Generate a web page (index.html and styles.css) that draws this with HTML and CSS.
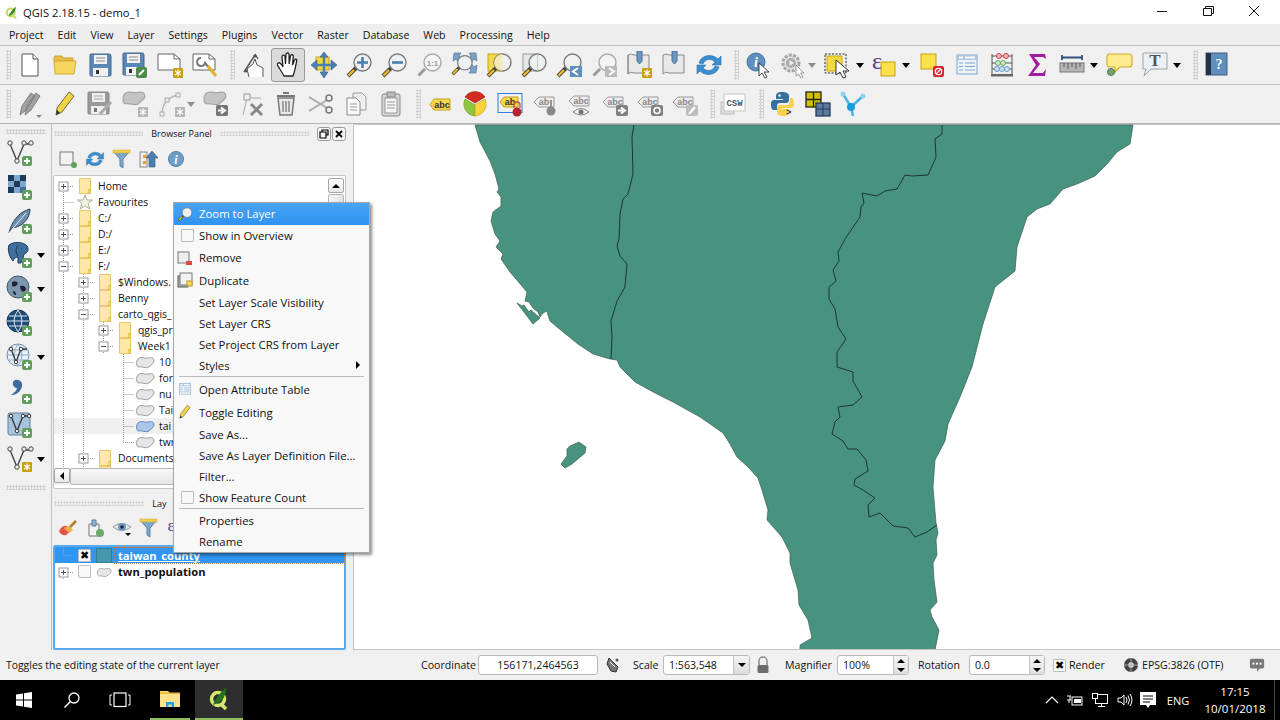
FILE: index.html
```html
<!doctype html>
<html lang="en">
  <head>
    <meta charset="utf-8">
    <title>QGIS 2.18.15 - demo_1</title>
    <link rel="stylesheet" href="styles.css">
  </head>
  <body>
    <svg class="sprite">
      <defs>
        <g id="lens">
          <path d="M3 25 L11 17" stroke="#444" stroke-width="4"/>
          <path d="M3.5 24.5 L9 19" stroke="#eebb22" stroke-width="2.4"/>
          <circle cx="17.5" cy="11.5" r="8.5" fill="#eef1f2" stroke="#7a7a7a" stroke-width="1.4"/>
        </g>
        <g id="lens-grey">
          <path d="M3.5 24.5 L10 18" stroke="#999" stroke-width="3"/>
          <circle cx="17.5" cy="11.5" r="8.5" fill="#f4f4f4" stroke="#a8a8a8" stroke-width="1.4"/>
        </g>
        <g id="floppy">
          <path d="M2 3 Q2 2 3 2 L21 2 Q23 2 23 4 L23 23 Q23 24 22 24 L3 24 Q2 24 2 23 Z" fill="#5a87b6" stroke="#44678f"/>
          <rect x="6" y="3" width="13" height="9" fill="#f2f2f2"/>
          <path d="M8 6 H17 M8 9 H17" stroke="#8a8a8a"/>
          <rect x="5" y="16" width="15" height="8" fill="#f2f2f2"/>
          <rect x="8" y="18" width="3" height="4" fill="#333"/>
        </g>
        <g id="floppy-grey">
          <path d="M2 3 Q2 2 3 2 L21 2 Q23 2 23 4 L23 23 Q23 24 22 24 L3 24 Q2 24 2 23 Z" fill="#9a9a9a" stroke="#858585"/>
          <rect x="6" y="3" width="13" height="9" fill="#eee"/>
          <path d="M8 6 H17 M8 9 H17" stroke="#aaa"/>
          <rect x="5" y="16" width="15" height="8" fill="#eee"/>
          <rect x="8" y="18" width="3" height="4" fill="#777"/>
        </g>
        <g id="star-badge">
          <rect x="17" y="17" width="10" height="10" rx="1" fill="#c99f0d"/>
          <path d="M22 18.5 V25.5 M19 20 L25 24 M25 20 L19 24" stroke="#fff" stroke-width="1.2"/>
        </g>
        <g id="star-badge-grey">
          <rect x="17" y="17" width="10" height="10" rx="1" fill="#b5b5b5"/>
          <path d="M22 18.5 V25.5 M19 20 L25 24 M25 20 L19 24" stroke="#fff" stroke-width="1.2"/>
        </g>
        <g id="plus-badge">
          <rect x="16" y="17" width="10" height="10" rx="2" fill="#5f9f5b"/>
          <path d="M21 19 V25 M18 22 H24" stroke="#fff" stroke-width="2"/>
        </g>
        <path id="blob-shape" d="M3 4 C6 1 10 4 13 3 C17 2 19 3 19 6 C19 9 15 10 14 12 C11 14 7 11 4 12 C1 12 1 6 3 4 Z"/>
        <g id="abc-grey">
          <path d="M1 9 L6 4 H21 V14 H6 Z" fill="#ececec" stroke="#9b9b9b"/>
        </g>
      </defs>

      <symbol id="i-new" viewBox="0 0 28 28"><path d="M6 3 H17 L22 8 V25 H6 Z" fill="#fff" stroke="#555"/><path d="M17 3 V8 H22" fill="#eee" stroke="#555"/></symbol>
      <symbol id="i-open" viewBox="0 0 28 28"><path d="M3 7 L4 5 H11 L13 7 H22 V10 H3 Z" fill="#e8bf45" stroke="#c9a030"/><path d="M3 10 H25 L23 23 H4 Z" fill="#f6d65f" stroke="#d3aa36"/></symbol>
      <symbol id="i-save" viewBox="0 0 28 28"><use href="#floppy" x="2" y="1"/></symbol>
      <symbol id="i-saveas" viewBox="0 0 28 28"><use href="#floppy" x="0" y="0"/><rect x="15" y="16" width="11" height="11" rx="2" fill="#4f8a4a"/><path d="M18 24 L23 19" stroke="#fff" stroke-width="2"/></symbol>
      <symbol id="i-layout" viewBox="0 0 28 28"><path d="M2 3 H18 L24 8 V19 H2 Z" fill="#fff" stroke="#666"/><path d="M18 3 V8 H24" fill="none" stroke="#666"/><use href="#star-badge" x="0" y="0"/></symbol>
      <symbol id="i-manager" viewBox="0 0 28 28"><path d="M2 3 H18 L24 8 V19 H2 Z" fill="#fff" stroke="#666"/><path d="M18 3 V8 H24" fill="none" stroke="#666"/><path d="M10 7 A4 4 0 1 0 14 12 L24 24" fill="none" stroke="#777" stroke-width="2"/><path d="M17 15 L25 25" stroke="#e0b32c" stroke-width="3"/></symbol>
      <symbol id="i-touch" viewBox="0 0 28 28"><path d="M15 4 L4 21 M15 3 L18 8" fill="none" stroke="#555" stroke-width="1.4"/><path d="M9 26 L7 18 L13 13 L15 8 L17 14 L23 17 V26" fill="#fff" stroke="#555"/><circle cx="6" cy="20" r="1.6" fill="#555"/><circle cx="15" cy="5" r="1.6" fill="#555"/></symbol>
      <symbol id="i-pan" viewBox="0 0 28 28"><path d="M10 25 C8 21 5 17 3.5 14 C3 11.5 5.5 11 7 13 L9 16 L8 6 C8 3.5 10.8 3.5 11 6 L11.5 13 L12 3.5 C12 1.5 15 1.5 15 3.5 L15.2 13 L16.5 5 C17 3 19.5 3.5 19.3 5.5 L18.5 14 L20.5 9 C21.2 7.5 23 8 22.7 9.8 L21 18 C20.5 21 19.5 23 19 25 Z" fill="#fff" stroke="#222" stroke-width="1.3"/></symbol>
      <symbol id="i-pansel" viewBox="0 0 28 28"><rect x="6" y="6" width="13" height="13" fill="#f4d63a" stroke="#c9a61d"/><path d="M14 1 L18 6 H10 Z M14 27 L18 21 H10 Z M1 14 L7 9 V19 Z M27 14 L21 9 V19 Z" fill="#4c7fb3" stroke="#33587f" stroke-width=".6"/><path d="M14 5 V23 M6 14 H22" stroke="#4c7fb3" stroke-width="2.4"/></symbol>
      <symbol id="i-zin" viewBox="0 0 28 28"><use href="#lens"/><path d="M17.5 6 V17 M12 11.5 H23" stroke="#4a7dae" stroke-width="2.6"/></symbol>
      <symbol id="i-zout" viewBox="0 0 28 28"><use href="#lens"/><path d="M12 11.5 H23" stroke="#4a7dae" stroke-width="2.6"/></symbol>
      <symbol id="i-z11" viewBox="0 0 28 28"><use href="#lens-grey"/><text x="17.5" y="15" class="svg-small" text-anchor="middle">1:1</text></symbol>
      <symbol id="i-zfull" viewBox="0 0 28 28"><path d="M4 2 H11 L9 5 L13 9 L9 12 L6 8 L3 10 Z M26 2 H19 L21 5 L17 9 L21 12 L24 8 L27 10 Z M26 22 H19 L21 19 L17 15 L21 12 L24 16 L27 14 Z" fill="#7ba0c6" stroke="#55799e" stroke-width=".7"/><use href="#lens" transform="translate(0 2) scale(.85)"/></symbol>
      <symbol id="i-zlayer" viewBox="0 0 28 28"><rect x="3" y="3" width="15" height="17" fill="#f3d84a" stroke="#c6a31c"/><use href="#lens"/><path d="M17.5 3 A8.5 8.5 0 0 0 17.5 20 Z" fill="#f3e9a8" opacity=".8"/></symbol>
      <symbol id="i-zsel" viewBox="0 0 28 28"><rect x="3" y="3" width="15" height="17" fill="#e6e6e6" stroke="#9a9a9a"/><use href="#lens"/><path d="M17.5 3 V20" stroke="#ccc"/></symbol>
      <symbol id="i-mzoom" viewBox="0 0 28 28"><use href="#lens"/></symbol>
      <symbol id="i-zlast" viewBox="0 0 28 28"><use href="#lens"/><rect x="15" y="15" width="12" height="11" fill="#5f8fbc"/><path d="M23 17 L18 20.5 L23 24" fill="none" stroke="#fff" stroke-width="2"/></symbol>
      <symbol id="i-znext" viewBox="0 0 28 28"><use href="#lens-grey"/><rect x="15" y="15" width="12" height="11" fill="#b9b9b9"/><path d="M19 17 L24 20.5 L19 24" fill="none" stroke="#fff" stroke-width="2"/></symbol>
      <symbol id="i-bmnew" viewBox="0 0 28 28"><path d="M3 4 Q6 2 9 4 H24 V22 H9 Q5 20 3 23 Z" fill="#e8e8e8" stroke="#888"/><path d="M3 4 V23" stroke="#888"/><path d="M12 0 H17 V10 L14.5 13 L12 10 Z" fill="#6b97c1" stroke="#4b7096"/><use href="#star-badge" x="0" y="0"/></symbol>
      <symbol id="i-bm" viewBox="0 0 28 28"><path d="M3 4 Q6 2 9 4 H24 V22 H9 Q5 20 3 23 Z" fill="#e8e8e8" stroke="#888"/><path d="M12 0 H17 V10 L14.5 13 L12 10 Z" fill="#6b97c1" stroke="#4b7096"/></symbol>
      <symbol id="i-refresh" viewBox="0 0 28 28"><path d="M4 12 C6 4 17 2 23 8 L26 5 V14 H17 L20 11 C16 7 10 8 8 13 Z" fill="#3d8ed0" stroke="#2d6ea6" stroke-width=".6"/><path d="M24 16 C22 24 11 26 5 20 L2 23 V14 H11 L8 17 C12 21 18 20 20 15 Z" fill="#3d8ed0" stroke="#2d6ea6" stroke-width=".6"/></symbol>
      <symbol id="i-identify" viewBox="0 0 28 28"><circle cx="12" cy="11" r="9" fill="#5f8fbf" stroke="#4a76a3"/><text x="12" y="16" class="svg-info" text-anchor="middle">i</text><path d="M15 12 L15 25 L18 22 L21 27 L23 26 L20 21 L25 21 Z" fill="#fff" stroke="#222" stroke-width=".8"/></symbol>
      <symbol id="i-action" viewBox="0 0 28 28"><circle cx="12" cy="12" r="8" fill="#e4e4e4" stroke="#a5a5a5" stroke-width="3" stroke-dasharray="3 1.4"/><circle cx="12" cy="12" r="5" fill="#aaa"/><path d="M10.5 9 L15 12 L10.5 15 Z" fill="#eee"/><path d="M17 14 L17 25 L19.5 23 L22 27 L24 26 L21.5 22 L25 22 Z" fill="#fff" stroke="#888" stroke-width=".8"/></symbol>
      <symbol id="i-select" viewBox="0 0 28 28"><rect x="2" y="3" width="21" height="19" fill="none" stroke="#222" stroke-dasharray="2 1.5"/><rect x="4" y="5" width="15" height="15" fill="#f6d93d" stroke="#c8a61e"/><path d="M13 9 L13 24 L17 21 L20 27 L23 26 L20 20 L26 20 Z" fill="#fff" stroke="#222" stroke-width=".9"/></symbol>
      <symbol id="i-expr" viewBox="0 0 28 28"><rect x="11" y="11" width="14" height="14" fill="#fbe04a" stroke="#c79f10"/><text x="2" y="18" class="svg-expr">&#949;</text></symbol>
      <symbol id="i-desel" viewBox="0 0 28 28"><rect x="3" y="3" width="15" height="15" fill="#f9e14d" stroke="#c89f14"/><rect x="15" y="15" width="11" height="11" rx="2" fill="#d9242e"/><circle cx="20.5" cy="20.5" r="3.2" fill="none" stroke="#fff" stroke-width="1.2"/><path d="M18.5 22.5 L22.5 18.5" stroke="#fff" stroke-width="1.2"/></symbol>
      <symbol id="i-table" viewBox="0 0 28 28"><rect x="4" y="4" width="20" height="19" fill="#eef3f8" stroke="#7ea5cc"/><rect x="4" y="4" width="20" height="5" fill="#aac5df"/><rect x="6" y="5.5" width="4" height="2" fill="#fff"/><rect x="12" y="5.5" width="10" height="2" fill="#fff"/><path d="M6 12 H10 M12 12 H22 M6 15.500 H10 M12 15.500 H22 M6 19 H10 M12 19 H22" stroke="#7ea5cc"/></symbol>
      <symbol id="i-abacus" viewBox="0 0 28 28"><path d="M4 3 V24 M24 3 V24 M4 5 H24 M4 12 H24 M4 18 H24" fill="none" stroke="#555"/><rect x="3" y="23" width="22" height="2.500" fill="#666"/><circle cx="11" cy="5" r="2.500" fill="#f0b7b7" stroke="#c44"/><circle cx="18" cy="5" r="2.500" fill="#f0b7b7" stroke="#c44"/><circle cx="10" cy="12" r="2.500" fill="#cfe7c4" stroke="#6a6"/><circle cx="15" cy="12" r="2.500" fill="#cfe7c4" stroke="#6a6"/><circle cx="9" cy="18" r="2.500" fill="#cfe0f2" stroke="#69c"/><circle cx="14" cy="18" r="2.500" fill="#cfe0f2" stroke="#69c"/><circle cx="19" cy="18" r="2.500" fill="#cfe0f2" stroke="#69c"/></symbol>
      <symbol id="i-sigma" viewBox="0 0 28 28"><path d="M6 3 H22 L23 8 L20 6 H11 L17 13 L10 22 H20 L23 18 L22 25 H5 L13 14 Z" fill="#a11ba0"/></symbol>
      <symbol id="i-measure" viewBox="0 0 28 28"><path d="M4 4 V9 M24 4 V9 M4 6.500 H24" stroke="#31517a" stroke-width="1.8"/><rect x="2" y="12" width="24" height="9" fill="#b5b5b5" stroke="#7b7b7b"/><path d="M6 12 V16 M10 12 V18 M14 12 V16 M18 12 V18 M22 12 V16" stroke="#555"/></symbol>
      <symbol id="i-tip" viewBox="0 0 28 28"><path d="M4 3 H23 Q26 3 26 6 V13 Q26 16 23 16 H14 L9 21 V16 H4 Q1 16 1 13 V6 Q1 3 4 3 Z" fill="#fdeb8e" stroke="#d3ac27" stroke-width="1.2"/><circle cx="5" cy="21" r="3.500" fill="#77a36f" stroke="#4d7a4a"/></symbol>
      <symbol id="i-text" viewBox="0 0 28 28"><path d="M2 2 H26 V18 H10 L3 25 L5 18 H2 Z" fill="#eaf0f4" stroke="#9aa3a8"/><text x="14" y="15" class="svg-t" text-anchor="middle">T</text></symbol>
      <symbol id="i-help" viewBox="0 0 28 28"><rect x="3" y="2" width="21" height="22" fill="#5f8fbf" stroke="#3e5f82"/><rect x="3" y="2" width="5" height="22" fill="#26323f"/><text x="16" y="18" class="svg-help" text-anchor="middle">?</text></symbol>

      <symbol id="i-edits" viewBox="0 0 28 28"><path d="M4 25 L6 16 L15 3 L19 6 L10 20 Z M9 25 L11 16 L20 3 L24 6 L15 20 Z" fill="#a2a2a2" stroke="#7e7e7e"/><path d="M20 25 H26 L23 28 Z" fill="#888"/></symbol>
      <symbol id="i-pencil" viewBox="0 0 28 28"><path d="M6 18 L18 2 L23 6 L11 22 L5 25 Z" fill="#eed446" stroke="#6f6a3f"/><path d="M5 25 L6 20 L9 23 Z" fill="#333"/></symbol>
      <symbol id="i-savedit" viewBox="0 0 28 28"><use href="#floppy-grey"/><path d="M14 24 L25 12" stroke="#aaa" stroke-width="3"/></symbol>
      <symbol id="i-addfeat" viewBox="0 0 28 28"><use href="#blob-shape" fill="#c4c4c4" stroke="#a5a5a5" transform="scale(1.25) translate(0 -1)"/><use href="#star-badge-grey"/></symbol>
      <symbol id="i-nodeadd" viewBox="0 0 28 28"><path d="M4 24 Q4 10 19 5" fill="none" stroke="#b5b5b5" stroke-width="1.4"/><rect x="2" y="22" width="4" height="4" fill="#eee" stroke="#aaa"/><rect x="7" y="8" width="4" height="4" fill="#eee" stroke="#aaa"/><rect x="18" y="3" width="4" height="4" fill="#eee" stroke="#aaa"/><use href="#star-badge-grey"/></symbol>
      <symbol id="i-movef" viewBox="0 0 28 28"><use href="#blob-shape" fill="#c4c4c4" stroke="#a5a5a5" transform="scale(1.25) translate(0 -1)"/><rect x="14" y="15" width="12" height="11" rx="1.500" fill="#777"/><path d="M16 20.500 H21 M19 17.500 L23 20.500 L19 23.500" fill="none" stroke="#fff" stroke-width="2"/></symbol>
      <symbol id="i-nodetool" viewBox="0 0 28 28"><path d="M6 25 L10 8 H24" fill="none" stroke="#aaa"/><rect x="7" y="4" width="6" height="6" fill="#eee" stroke="#999"/><path d="M14 14 L25 25 M14 25 L25 14" stroke="#888" stroke-width="3"/></symbol>
      <symbol id="i-delete" viewBox="0 0 28 28"><path d="M6 8 H22 L20 25 H8 Z" fill="#e9e9e9" stroke="#777" stroke-width="1.500"/><path d="M5 6 H23 M11 3 H17" stroke="#777" stroke-width="1.800"/><path d="M11 11 V22 M14 11 V22 M17 11 V22" stroke="#888" stroke-width="1.500"/></symbol>
      <symbol id="i-cut" viewBox="0 0 28 28"><path d="M2 7 L20 18 M2 21 L20 10" stroke="#aaa" stroke-width="2"/><circle cx="22" cy="8" r="3" fill="none" stroke="#777" stroke-width="1.500"/><circle cx="22" cy="20" r="3" fill="none" stroke="#777" stroke-width="1.500"/></symbol>
      <symbol id="i-copy" viewBox="0 0 28 28"><path d="M11 3 H20 L24 7 V20 H11 Z" fill="#eee" stroke="#999"/><path d="M5 8 H14 L18 12 V25 H5 Z" fill="#fafafa" stroke="#888"/><path d="M8 14 H15 M8 17 H15 M8 20 H15" stroke="#999"/></symbol>
      <symbol id="i-paste" viewBox="0 0 28 28"><rect x="5" y="4" width="18" height="22" rx="2" fill="#d7d7d7" stroke="#888"/><rect x="10" y="2" width="8" height="5" fill="#bbb" stroke="#888"/><rect x="8" y="8" width="12" height="15" fill="#f6f6f6" stroke="#999"/><path d="M10 12 H18 M10 15 H18 M10 18 H18" stroke="#999"/></symbol>
      <symbol id="i-abc" viewBox="0 0 28 28"><path d="M4 14.500 L8 9 H24 V20 H8 Z" fill="#f5d94a" stroke="#c7a11c"/><text x="16" y="17.500" class="svg-abc" text-anchor="middle">abc</text></symbol>
      <symbol id="i-style" viewBox="0 0 28 28"><path d="M14 15 L4 9 A12 12 0 0 0 14 26 Z" fill="#8ec63f" stroke="#6d9b2b" stroke-width=".7"/><path d="M14 15 L24 9 A12 12 0 0 1 14 26 Z" fill="#f7d43e" stroke="#c9a41a" stroke-width=".7"/><path d="M14 15 L4 9 A12 12 0 0 1 24 9 Z" fill="#d42a20" stroke="#a71c15" stroke-width=".7" transform="translate(0 -2)"/></symbol>
      <symbol id="i-pin" viewBox="0 0 28 28"><rect x="2" y="3.500" width="24" height="19" fill="none" stroke="#2e7de0"/><path d="M4 12 L8 7 H22 V17 H8 Z" fill="#f5d94a" stroke="#c7a11c"/><text x="14" y="15" class="svg-abc" text-anchor="middle">ab</text><path d="M18 18 V15 A3 3 0 0 1 24 15 V18" fill="none" stroke="#b55" stroke-width="1.300"/><circle cx="21" cy="22" r="4.500" fill="#b42430"/></symbol>
      <symbol id="i-abcpin" viewBox="0 0 28 28"><use href="#abc-grey" x="2" y="3"/><text x="13" y="15" class="svg-abcg" text-anchor="middle">ab</text><path d="M20 19 V10" stroke="#777" stroke-width="1.500"/><circle cx="20" cy="21" r="4.500" fill="#888"/></symbol>
      <symbol id="i-abceye" viewBox="0 0 28 28"><use href="#abc-grey" x="2" y="2"/><text x="15" y="14" class="svg-abcg" text-anchor="middle">abc</text><path d="M7 22 Q15 15 23 22 Q15 28 7 22 Z" fill="#eee" stroke="#888"/><circle cx="15" cy="22" r="2.500" fill="#777"/></symbol>
      <symbol id="i-abcmove" viewBox="0 0 28 28"><use href="#abc-grey" x="1" y="3"/><text x="14" y="15" class="svg-abcg" text-anchor="middle">abc</text><rect x="15" y="15" width="12" height="11" rx="2" fill="#808080"/><path d="M17 20.500 H22 M20 17.500 L24 20.500 L20 23.500" fill="none" stroke="#fff" stroke-width="2"/></symbol>
      <symbol id="i-abcrot" viewBox="0 0 28 28"><use href="#abc-grey" x="1" y="3"/><text x="14" y="15" class="svg-abcg" text-anchor="middle">abc</text><rect x="15" y="15" width="12" height="11" rx="2" fill="#808080"/><circle cx="21" cy="20.500" r="3" fill="none" stroke="#fff" stroke-width="1.500"/></symbol>
      <symbol id="i-abcedit" viewBox="0 0 28 28"><use href="#abc-grey" x="1" y="3"/><text x="14" y="15" class="svg-abcg" text-anchor="middle">abc</text><rect x="15" y="15" width="12" height="11" rx="2" fill="#bdbdbd"/><path d="M18 24 L24 17" stroke="#fff" stroke-width="2"/></symbol>
      <symbol id="i-csw" viewBox="0 0 28 28"><rect x="1" y="12" width="13" height="12" fill="#ddd" stroke="#bbb"/><rect x="4" y="4" width="21" height="17" fill="#fff" stroke="#c4c4c4"/><text x="14.500" y="16" class="svg-csw" text-anchor="middle">CSW</text></symbol>
      <symbol id="i-python" viewBox="0 0 28 28"><path d="M13 2 C8 2 7 4 7 6 V9 H14 V10 H5 C2 10 2 13 2 15 C2 18 3 20 5 20 H8 V16 C8 14 9 13 11 13 H17 C19 13 20 12 20 10 V6 C20 3 17 2 13 2 Z" fill="#376f9f"/><path d="M14 26 C19 26 20 24 20 22 V19 H13 V18 H22 C25 18 25 15 25 13 C25 10 24 8 22 8 H21 V11 C21 14 20 15 18 15 H11 C9 15 8 16 8 18 V22 C8 25 11 26 14 26 Z" fill="#f6d14d"/><circle cx="10.500" cy="5.500" r="1.200" fill="#fff"/><text x="17" y="25" class="svg-py">&gt;</text></symbol>
      <symbol id="i-plugin" viewBox="0 0 28 28"><rect x="2" y="2" width="15" height="15" fill="#d3c000" stroke="#222" stroke-width="1.300"/><path d="M9.500 2 V17 M2 9.500 H17" stroke="#222" stroke-width="1.300"/><rect x="12" y="13" width="14" height="13" fill="#5a7a9e" stroke="#263c55" stroke-width="1.300"/><path d="M19 13 V26 M12 19 H26" stroke="#263c55"/></symbol>
      <symbol id="i-v" viewBox="0 0 28 28"><path d="M4 4 L12 17 L14 26 M12 17 L24 6" fill="none" stroke="#45b2e8" stroke-width="2.400"/><circle cx="4" cy="4" r="2.500" fill="#8fd3f4"/><circle cx="12" cy="17" r="4" fill="#1b9be0"/><circle cx="24" cy="6" r="2.500" fill="#8fd3f4"/></symbol>

      <symbol id="i-addogr" viewBox="0 0 28 28"><path d="M4 5 L11 22 L18 5 L25 5" fill="none" stroke="#444" stroke-width="1.400"/><circle cx="4" cy="4" r="2.200" fill="#eee" stroke="#444"/><circle cx="11" cy="22" r="2.200" fill="#eee" stroke="#444"/><circle cx="18" cy="4" r="2.200" fill="#eee" stroke="#444"/><circle cx="25" cy="4" r="2.200" fill="#eee" stroke="#444"/><use href="#plus-badge"/></symbol>
      <symbol id="i-addraster" viewBox="0 0 28 28"><rect x="2" y="2" width="18" height="18" fill="#7fa8cf"/><rect x="2" y="2" width="6" height="6" fill="#1f3a57"/><rect x="14" y="2" width="6" height="6" fill="#1f3a57"/><rect x="8" y="8" width="6" height="6" fill="#1f3a57"/><rect x="2" y="14" width="6" height="6" fill="#1f3a57"/><rect x="14" y="14" width="6" height="6" fill="#456f98"/><use href="#plus-badge"/></symbol>
      <symbol id="i-addlite" viewBox="0 0 28 28"><path d="M3 26 C5 16 12 5 24 2 C24 12 16 20 6 21 Z" fill="#6d8cab" stroke="#31465e"/><path d="M3 26 L20 6" stroke="#e6edf4"/><use href="#plus-badge"/></symbol>
      <symbol id="i-addpg" viewBox="0 0 28 28"><path d="M3 4 C8 0 18 1 21 5 C24 9 20 13 18 13 C17 17 17 20 15 22 H12 V16 C9 16 8 18 7 20 C4 17 1 9 3 4 Z" fill="#3f6f9f" stroke="#1c3a59"/><path d="M12 4 Q8 10 12 15 M15 7 L16 8" fill="none" stroke="#1c3a59"/><use href="#plus-badge"/></symbol>
      <symbol id="i-addwms" viewBox="0 0 28 28"><circle cx="12" cy="12" r="11" fill="#7d97ae" stroke="#42596e"/><path d="M6 7 Q10 5 12 8 Q10 13 6 11 Z M14 11 Q20 10 20 15 Q15 20 14 11 Z M7 16 Q10 16 10 20 Q7 20 7 16 Z" fill="#223"/><use href="#plus-badge"/></symbol>
      <symbol id="i-addwcs" viewBox="0 0 28 28"><circle cx="12" cy="12" r="11" fill="#204c7a" stroke="#14324f"/><path d="M1 12 H23 M3 7 H21 M3 17 H21 M12 1 Q4 12 12 23 Q20 12 12 1 Z" fill="none" stroke="#dbe7f2"/><use href="#plus-badge"/></symbol>
      <symbol id="i-addwfs" viewBox="0 0 28 28"><circle cx="12" cy="12" r="11" fill="#e8f0f7" stroke="#6e8fb0"/><path d="M1 12 H23 M3 7 H21 M3 17 H21 M12 1 Q4 12 12 23 Q20 12 12 1 Z" fill="none" stroke="#8facc8"/><path d="M5 6 L10 19 L15 6 L21 6" fill="none" stroke="#333" stroke-width="1.300"/><circle cx="5" cy="6" r="1.800" fill="#eee" stroke="#333"/><circle cx="10" cy="19" r="1.800" fill="#eee" stroke="#333"/><circle cx="15" cy="6" r="1.800" fill="#eee" stroke="#333"/><use href="#plus-badge"/></symbol>
      <symbol id="i-addcomma" viewBox="0 0 28 28"><path d="M9 3 C15 2 18 7 15 12 C13 16 9 18 5 18 C9 15 11 13 11 11 C7 11 5 5 9 3 Z" fill="#3e6d9b"/><use href="#plus-badge"/></symbol>
      <symbol id="i-addvt" viewBox="0 0 28 28"><rect x="2" y="2" width="22" height="22" rx="2" fill="#a8c3dc" stroke="#5f7f9f"/><path d="M5 5 L11 20 L17 5 L23 5" fill="none" stroke="#333" stroke-width="1.300"/><circle cx="5" cy="5" r="1.800" fill="#eee" stroke="#333"/><circle cx="11" cy="20" r="1.800" fill="#eee" stroke="#333"/><circle cx="17" cy="5" r="1.800" fill="#eee" stroke="#333"/><circle cx="23" cy="5" r="1.800" fill="#eee" stroke="#333"/><use href="#plus-badge"/></symbol>
      <symbol id="i-newv" viewBox="0 0 28 28"><path d="M4 5 L11 22 L18 5 L25 5" fill="none" stroke="#444" stroke-width="1.400"/><circle cx="4" cy="4" r="2.200" fill="#eee" stroke="#444"/><circle cx="11" cy="22" r="2.200" fill="#eee" stroke="#444"/><circle cx="18" cy="4" r="2.200" fill="#eee" stroke="#444"/><circle cx="25" cy="4" r="2.200" fill="#eee" stroke="#444"/><use href="#star-badge" x="-1"/></symbol>

      <symbol id="i-bnew" viewBox="0 0 20 20"><rect x="2" y="3" width="13" height="13" fill="#f2f2f2" stroke="#777"/><circle cx="16" cy="16" r="3" fill="#5da35a"/></symbol>
      <symbol id="i-bfilter" viewBox="0 0 20 20"><path d="M1 2 H18 L11 10 V19 L8 17 V10 Z" fill="#7ea9cc" stroke="#5b83a8"/><rect x="1" y="1" width="17" height="3" fill="#f1d04b" stroke="#c7a62a" stroke-width=".5"/></symbol>
      <symbol id="i-bcollapse" viewBox="0 0 20 20"><rect x="1" y="3" width="7" height="15" fill="#eee" stroke="#888"/><rect x="4" y="6" width="3" height="3" fill="#ee9b2d"/><rect x="4" y="12" width="3" height="3" fill="#ee9b2d"/><path d="M13 2 L19 9 H16 V18 H10 V9 H7 Z" fill="#4d7dab" stroke="#33587f" stroke-width=".6"/></symbol>
      <symbol id="i-binfo" viewBox="0 0 20 20"><circle cx="10" cy="10" r="7.500" fill="#6f9dca" stroke="#527da8"/><text x="10" y="14.500" class="svg-binfo" text-anchor="middle">i</text></symbol>
      <symbol id="i-lstyle" viewBox="0 0 20 20"><path d="M1 13 Q4 7 9 8 L13 13 L8 17 Q3 18 1 13 Z" fill="#e2534b"/><path d="M6 10 L11 8 L15 12 L11 15 Z" fill="#f0b341"/><path d="M12 9 L18 3" stroke="#b57a32" stroke-width="2.600"/></symbol>
      <symbol id="i-laddgroup" viewBox="0 0 20 20"><path d="M4 6 H14 V18 H4 Z" fill="#f2f2f2" stroke="#777"/><path d="M7 2 H11 V8 H7 Z" fill="#8fb5d6" stroke="#55789a"/><circle cx="15" cy="15" r="4" fill="#6aa868"/></symbol>
      <symbol id="i-leye" viewBox="0 0 20 20"><path d="M1 9 Q9 2 19 9 Q9 16 1 9 Z" fill="#e8e8e8" stroke="#999"/><circle cx="10" cy="9" r="4" fill="#6d99c4"/><circle cx="10" cy="9" r="1.800" fill="#223"/><path d="M13 15 H19 L16 18 Z" fill="#000"/></symbol>

      <symbol id="i-folder" viewBox="0 0 12 16"><path d="M0.500 0.500 H11.500 V15.500 H0.500 Z" fill="#fde9a5" stroke="#e9c76a"/><path d="M10 11 H11.500 V15.500 H9 Z" fill="#fbd96d" stroke="#d9b450" stroke-width=".7"/></symbol>
      <symbol id="i-star" viewBox="0 0 16 16"><path d="M8 1 L10 6 L15.500 6 L11 9.500 L12.800 15 L8 11.800 L3.200 15 L5 9.500 L0.500 6 L6 6 Z" fill="#f1f1e4" stroke="#adad9a"/></symbol>
      <symbol id="i-blob" viewBox="0 0 20 14"><use href="#blob-shape" fill="#e6e6e6" stroke="#9b9b9b"/></symbol>
      <symbol id="i-blobblue" viewBox="0 0 20 14"><use href="#blob-shape" fill="#a9c8ea" stroke="#5d88b4"/></symbol>

      <symbol id="t-v" viewBox="0 0 20 16"><path d="M9.500 0 V16" class="dots"/></symbol>
      <symbol id="t-t" viewBox="0 0 20 16"><path d="M9.500 0 V16 M9.500 8.500 H20" class="dots"/></symbol>
      <symbol id="t-l" viewBox="0 0 20 16"><path d="M9.500 0 V8.500 H20" class="dots"/></symbol>
      <symbol id="t-plus" viewBox="0 0 20 16"><path d="M9.500 0 V16 M14 8.500 H20" class="dots"/><rect x="5" y="4" width="9" height="9" fill="#fff" stroke="#999"/><path d="M7 8.500 H12 M9.500 6 V11" stroke="#555"/></symbol>
      <symbol id="t-minus" viewBox="0 0 20 16"><path d="M9.500 0 V16 M14 8.500 H20" class="dots"/><rect x="5" y="4" width="9" height="9" fill="#fff" stroke="#999"/><path d="M7 8.500 H12" stroke="#555"/></symbol>
      <symbol id="t-plus-first" viewBox="0 0 20 16"><path d="M9.500 8 V16 M14 8.500 H20" class="dots"/><rect x="5" y="4" width="9" height="9" fill="#fff" stroke="#999"/><path d="M7 8.500 H12 M9.500 6 V11" stroke="#555"/></symbol>
      <symbol id="t-blank" viewBox="0 0 20 16"></symbol>
    </svg>

    <div class="app">
      <div class="titlebar">
        <svg class="app-logo" viewBox="0 0 18 18">
          <circle cx="8" cy="9" r="5.500" fill="none" stroke="#c6dd62" stroke-width="3"/>
          <path d="M11 13 L15 17" stroke="#c6dd62" stroke-width="3"/>
          <path d="M5 14 C7 8 11 4 15 1 C15 6 12 11 8 13 Z" fill="#3f8a2c"/>
        </svg>
        <span class="title-text">QGIS 2.18.15 - demo_1</span>
        <div class="window-buttons">
          <svg class="win-btn" viewBox="0 0 46 20"><path d="M18 10.500 H28" stroke="#111"/></svg>
          <svg class="win-btn" viewBox="0 0 46 20"><path d="M18.500 7.500 H26.500 V14.500 H18.500 Z M20.500 7 V5.500 H28.500 V12.500 H27" fill="none" stroke="#111"/></svg>
          <svg class="win-btn" viewBox="0 0 46 20"><path d="M18 5 L28 15 M28 5 L18 15" stroke="#111"/></svg>
        </div>
      </div>

      <div class="menubar">
        <span>Project</span><span>Edit</span><span>View</span><span>Layer</span><span>Settings</span><span>Plugins</span><span>Vector</span><span>Raster</span><span>Database</span><span>Web</span><span>Processing</span><span>Help</span>
      </div>

      <div class="toolbar">
        <i class="grip grip-first"></i>
        <div class="tool"><svg><use href="#i-new"/></svg></div>
        <div class="tool"><svg><use href="#i-open"/></svg></div>
        <div class="tool"><svg><use href="#i-save"/></svg></div>
        <div class="tool"><svg><use href="#i-saveas"/></svg></div>
        <div class="tool"><svg><use href="#i-layout"/></svg></div>
        <div class="tool"><svg><use href="#i-manager"/></svg></div>
        <i class="grip grip-mid"></i>
        <div class="tool"><svg><use href="#i-touch"/></svg></div>
        <div class="tool active"><svg><use href="#i-pan"/></svg></div>
        <div class="tool"><svg><use href="#i-pansel"/></svg></div>
        <div class="tool"><svg><use href="#i-zin"/></svg></div>
        <div class="tool"><svg><use href="#i-zout"/></svg></div>
        <div class="tool"><svg><use href="#i-z11"/></svg></div>
        <div class="tool"><svg><use href="#i-zfull"/></svg></div>
        <div class="tool"><svg><use href="#i-zlayer"/></svg></div>
        <div class="tool"><svg><use href="#i-zsel"/></svg></div>
        <div class="tool"><svg><use href="#i-zlast"/></svg></div>
        <div class="tool"><svg><use href="#i-znext"/></svg></div>
        <div class="tool"><svg><use href="#i-bmnew"/></svg></div>
        <div class="tool"><svg><use href="#i-bm"/></svg></div>
        <div class="tool"><svg><use href="#i-refresh"/></svg></div>
        <i class="grip grip-mid"></i>
        <div class="tool"><svg><use href="#i-identify"/></svg></div>
        <div class="tool"><svg><use href="#i-action"/></svg></div>
        <i class="drop drop-grey"></i>
        <div class="tool"><svg><use href="#i-select"/></svg></div>
        <i class="drop drop-wide"></i>
        <div class="tool"><svg><use href="#i-expr"/></svg></div>
        <i class="drop"></i>
        <div class="tool"><svg><use href="#i-desel"/></svg></div>
        <div class="tool"><svg><use href="#i-table"/></svg></div>
        <div class="tool"><svg><use href="#i-abacus"/></svg></div>
        <div class="tool"><svg><use href="#i-sigma"/></svg></div>
        <div class="tool"><svg><use href="#i-measure"/></svg></div>
        <i class="drop"></i>
        <div class="tool"><svg><use href="#i-tip"/></svg></div>
        <div class="tool"><svg><use href="#i-text"/></svg></div>
        <i class="drop"></i>
        <i class="grip grip-mid"></i>
        <div class="tool"><svg><use href="#i-help"/></svg></div>
      </div>

      <div class="toolbar toolbar-second">
        <i class="grip grip-first"></i>
        <div class="tool"><svg><use href="#i-edits"/></svg></div>
        <div class="tool"><svg><use href="#i-pencil"/></svg></div>
        <div class="tool"><svg><use href="#i-savedit"/></svg></div>
        <div class="tool"><svg><use href="#i-addfeat"/></svg></div>
        <div class="tool tool-node"><svg><use href="#i-nodeadd"/></svg></div>
        <i class="drop drop-grey"></i>
        <div class="tool"><svg><use href="#i-movef"/></svg></div>
        <div class="tool"><svg><use href="#i-nodetool"/></svg></div>
        <div class="tool"><svg><use href="#i-delete"/></svg></div>
        <div class="tool"><svg><use href="#i-cut"/></svg></div>
        <div class="tool"><svg><use href="#i-copy"/></svg></div>
        <div class="tool"><svg><use href="#i-paste"/></svg></div>
        <i class="grip grip-mid"></i>
        <div class="tool"><svg><use href="#i-abc"/></svg></div>
        <div class="tool"><svg><use href="#i-style"/></svg></div>
        <div class="tool"><svg><use href="#i-pin"/></svg></div>
        <div class="tool"><svg><use href="#i-abcpin"/></svg></div>
        <div class="tool"><svg><use href="#i-abceye"/></svg></div>
        <div class="tool"><svg><use href="#i-abcmove"/></svg></div>
        <div class="tool"><svg><use href="#i-abcrot"/></svg></div>
        <div class="tool"><svg><use href="#i-abcedit"/></svg></div>
        <i class="grip grip-mid"></i>
        <div class="tool"><svg><use href="#i-csw"/></svg></div>
        <i class="grip grip-mid"></i>
        <div class="tool"><svg><use href="#i-python"/></svg></div>
        <div class="tool"><svg><use href="#i-plugin"/></svg></div>
        <div class="tool"><svg><use href="#i-v"/></svg></div>
      </div>

      <div class="main">
        <div class="side-toolbar">
          <i class="grip-h grip-top"></i>
          <div class="side-tool"><svg><use href="#i-addogr"/></svg></div>
          <div class="side-tool"><svg><use href="#i-addraster"/></svg></div>
          <div class="side-tool"><svg><use href="#i-addlite"/></svg></div>
          <div class="side-tool"><svg><use href="#i-addpg"/></svg><i class="drop"></i></div>
          <div class="side-tool"><svg><use href="#i-addwms"/></svg><i class="drop"></i></div>
          <div class="side-tool"><svg><use href="#i-addwcs"/></svg></div>
          <div class="side-tool"><svg><use href="#i-addwfs"/></svg><i class="drop"></i></div>
          <div class="side-tool"><svg><use href="#i-addcomma"/></svg></div>
          <div class="side-tool"><svg><use href="#i-addvt"/></svg></div>
          <div class="side-tool"><svg><use href="#i-newv"/></svg><i class="drop"></i></div>
          <i class="grip-h grip-bottom"></i>
        </div>

        <div class="dock">
          <div class="dock-title">
            <i class="grip-title"></i>
            <span>Browser Panel</span>
            <i class="grip-title"></i>
            <div class="dock-buttons">
              <svg viewBox="0 0 14 14"><rect x=".5" y=".5" width="13" height="13" rx="2" fill="#f5f5f5" stroke="#999"/><path d="M5 5 V3 H11 V8 H9 M3 5 H9 V11 H3 Z" fill="none" stroke="#000" stroke-width="1.200"/></svg>
              <svg viewBox="0 0 14 14"><rect x=".5" y=".5" width="13" height="13" rx="2" fill="#f5f5f5" stroke="#999"/><path d="M4 4 L10 10 M10 4 L4 10" stroke="#000" stroke-width="1.800"/></svg>
            </div>
          </div>
          <div class="dock-tools">
            <svg><use href="#i-bnew"/></svg>
            <svg><use href="#i-refresh"/></svg>
            <svg><use href="#i-bfilter"/></svg>
            <svg><use href="#i-bcollapse"/></svg>
            <svg><use href="#i-binfo"/></svg>
          </div>

          <div class="tree">
            <div class="tree-top">
              <div class="tree-rows">
                <div class="row"><svg class="t"><use href="#t-plus-first"/></svg><svg class="f"><use href="#i-folder"/></svg><span>Home</span></div>
                <div class="row"><svg class="t"><use href="#t-t"/></svg><svg class="s"><use href="#i-star"/></svg><span>Favourites</span></div>
                <div class="row"><svg class="t"><use href="#t-plus"/></svg><svg class="f"><use href="#i-folder"/></svg><span>C:/</span></div>
                <div class="row"><svg class="t"><use href="#t-plus"/></svg><svg class="f"><use href="#i-folder"/></svg><span>D:/</span></div>
                <div class="row"><svg class="t"><use href="#t-plus"/></svg><svg class="f"><use href="#i-folder"/></svg><span>E:/</span></div>
                <div class="row"><svg class="t"><use href="#t-minus"/></svg><svg class="f"><use href="#i-folder"/></svg><span>F:/</span></div>
                <div class="row"><svg class="t"><use href="#t-v"/></svg><svg class="t"><use href="#t-plus"/></svg><svg class="f"><use href="#i-folder"/></svg><span>$Windows.</span></div>
                <div class="row"><svg class="t"><use href="#t-v"/></svg><svg class="t"><use href="#t-plus"/></svg><svg class="f"><use href="#i-folder"/></svg><span>Benny</span></div>
                <div class="row"><svg class="t"><use href="#t-v"/></svg><svg class="t"><use href="#t-minus"/></svg><svg class="f"><use href="#i-folder"/></svg><span>carto_qgis_</span></div>
                <div class="row"><svg class="t"><use href="#t-v"/></svg><svg class="t"><use href="#t-v"/></svg><svg class="t"><use href="#t-plus"/></svg><svg class="f"><use href="#i-folder"/></svg><span>qgis_pr</span></div>
                <div class="row"><svg class="t"><use href="#t-v"/></svg><svg class="t"><use href="#t-v"/></svg><svg class="t"><use href="#t-minus"/></svg><svg class="f"><use href="#i-folder"/></svg><span>Week1</span></div>
                <div class="row"><svg class="t"><use href="#t-v"/></svg><svg class="t"><use href="#t-v"/></svg><svg class="t"><use href="#t-blank"/></svg><svg class="t"><use href="#t-t"/></svg><svg class="b"><use href="#i-blob"/></svg><span>10</span></div>
                <div class="row"><svg class="t"><use href="#t-v"/></svg><svg class="t"><use href="#t-v"/></svg><svg class="t"><use href="#t-blank"/></svg><svg class="t"><use href="#t-t"/></svg><svg class="b"><use href="#i-blob"/></svg><span>for</span></div>
                <div class="row"><svg class="t"><use href="#t-v"/></svg><svg class="t"><use href="#t-v"/></svg><svg class="t"><use href="#t-blank"/></svg><svg class="t"><use href="#t-t"/></svg><svg class="b"><use href="#i-blob"/></svg><span>nu</span></div>
                <div class="row"><svg class="t"><use href="#t-v"/></svg><svg class="t"><use href="#t-v"/></svg><svg class="t"><use href="#t-blank"/></svg><svg class="t"><use href="#t-t"/></svg><svg class="b"><use href="#i-blob"/></svg><span>Tai</span></div>
                <div class="row row-current"><svg class="t"><use href="#t-v"/></svg><svg class="t"><use href="#t-v"/></svg><svg class="t"><use href="#t-blank"/></svg><svg class="t"><use href="#t-t"/></svg><svg class="b"><use href="#i-blobblue"/></svg><span>tai</span></div>
                <div class="row"><svg class="t"><use href="#t-v"/></svg><svg class="t"><use href="#t-v"/></svg><svg class="t"><use href="#t-blank"/></svg><svg class="t"><use href="#t-l"/></svg><svg class="b"><use href="#i-blob"/></svg><span>twn</span></div>
                <div class="row"><svg class="t"><use href="#t-v"/></svg><svg class="t"><use href="#t-plus"/></svg><svg class="f"><use href="#i-folder"/></svg><span>Documents</span></div>
                <div class="row"><svg class="t"><use href="#t-v"/></svg><svg class="t"><use href="#t-plus"/></svg><svg class="f"><use href="#i-folder"/></svg></div>
              </div>
              <div class="vscroll">
                <div class="scroll-btn"><i class="arrow-up"></i></div>
                <div class="scroll-thumb"></div>
              </div>
            </div>
            <div class="hscroll">
              <div class="scroll-btn"><i class="arrow-left"></i></div>
              <div class="hscroll-thumb"></div>
            </div>
          </div>

          <i class="splitter"></i>
          <div class="dock-title dock-title-layers">
            <i class="grip-title"></i>
            <span class="title-stub">Lay</span>
            <i class="title-gap"></i>
          </div>
          <div class="dock-tools dock-tools-layers">
            <svg><use href="#i-lstyle"/></svg>
            <svg><use href="#i-laddgroup"/></svg>
            <svg><use href="#i-leye"/></svg>
            <svg><use href="#i-bfilter"/></svg>
            <svg><use href="#i-expr"/></svg>
          </div>

          <div class="layers">
            <div class="layer layer-selected">
              <svg class="t"><use href="#t-l"/></svg>
              <i class="check check-on">&#10006;</i>
              <i class="swatch"></i>
              <span class="layer-name">taiwan_county</span>
            </div>
            <div class="layer">
              <svg class="t"><use href="#t-plus-first"/></svg>
              <i class="check"></i>
              <svg class="layer-blob"><use href="#i-blob"/></svg>
              <span class="layer-name">twn_population</span>
            </div>
          </div>
        </div>

        <div class="canvas">
          <svg class="map" viewBox="353 124 927 525">
            <path class="land" d="M475 125 L480 142 L490 161 L495 174 L499 189 L497 192 L501 197 L501 206 L493 212 L491 221 L495 234 L500 241 L496 247 L503 254 L501 259 L510 272 L527 292 L525 301 L529 302 L533 308 L538 312 L540 317 L543 313 L547 311 L548 315 L550 321 L563 332 L578 344 L593 354 L610 359 L617 360 L620 367 L635 382 L655 393 L673 402 L700 417 L723 433 L730 444 L737 457 L748 467 L758 478 L762 490 L768 510 L767 520 L782 537 L790 553 L790 563 L798 590 L799 605 L808 620 L812 638 L800 645 L800 650 L935 650 L939 630 L932 617 L930 610 L937 602 L934 580 L933 563 L937 555 L936 540 L938 533 L936 523 L933 487 L935 460 L945 441 L948 424 L960 397 L972 367 L983 324 L995 287 L1015 271 L1017 247 L1027 217 L1037 209 L1050 204 L1063 189 L1077 184 L1095 176 L1107 164 L1117 152 L1130 144 L1133 125 Z"/>
            <path class="land" d="M517 303 L522 306 L524 305 L529 312 L531 310 L540 318 L533 324 Z"/>
            <path class="land" d="M570 446 L579 442 L586 447 L585 453 L572 464 L565 468 L561 464 L567 456 L567 449 Z"/>
            <path class="border" d="M634 125 L632 137 L633 174 L628 194 L623 199 L620 214 L619 239 L617 246 L620 256 L627 264 L625 287 L617 301 L611 321 L612 337 L611 359"/>
            <path class="border" d="M942 125 L942 134 L935 139 L936 157 L928 175 L912 176 L905 175 L897 189 L885 191 L877 196 L862 193 L864 203 L861 207 L860 217 L845 239 L838 252 L839 261 L833 270 L836 281 L829 287 L829 299 L835 309 L838 327 L846 339 L837 352 L837 367 L853 372 L853 381 L862 397 L853 405 L838 407 L840 417 L835 422 L832 434 L843 441 L848 449 L857 449 L866 460 L868 471 L855 479 L854 485 L863 490 L875 498 L868 505 L869 517 L880 513 L893 526 L908 528 L915 537 L927 532 L937 525"/>
          </svg>
        </div>
      </div>

      <div class="statusbar">
        <span class="status-msg">Toggles the editing state of the current layer</span>
        <span>Coordinate</span>
        <span class="field field-center">156171,2464563</span>
        <svg class="status-icon" viewBox="0 0 16 18"><path d="M4 2 L13 11 L11 16 L6 15 L2 8 Z" fill="#777" stroke="#333"/><path d="M5 6 L10 11 M7 4 L12 9" stroke="#fff"/><circle cx="12" cy="4" r="1.500" fill="#555"/></svg>
        <span class="status-pad">Scale</span>
        <span class="field field-combo"><span>1:563,548</span><i class="combo-btn"><i class="arrow-down"></i></i></span>
        <svg class="status-icon" viewBox="0 0 14 18"><path d="M3 9 V5 A4 4 0 0 1 11 5 V9" fill="none" stroke="#8a8a8a" stroke-width="1.500"/><rect x="1.500" y="9" width="11" height="8" rx="1.500" fill="#6c6c6c"/></svg>
        <span class="status-pad-wide">Magnifier</span>
        <span class="field field-spin"><span>100%</span><i class="spin"><i class="arrow-up"></i><i class="arrow-down"></i></i></span>
        <span class="status-pad-wide">Rotation</span>
        <span class="field field-spin"><span>0.0</span><i class="spin"><i class="arrow-up"></i><i class="arrow-down"></i></i></span>
        <span class="status-check"><i class="check check-on">&#10006;</i></span>
        <span>Render</span>
        <svg class="status-icon" viewBox="0 0 16 16"><circle cx="8" cy="8" r="7" fill="#444"/><circle cx="8" cy="8" r="3.500" fill="#ddd" stroke="#222"/><path d="M8 1 V15 M1 8 H15" stroke="#aaa"/></svg>
        <span>EPSG:3826 (OTF)</span>
        <svg class="status-icon" viewBox="0 0 18 18"><path d="M3 2 H15 Q17 2 17 4 V11 Q17 13 15 13 H12 L9 17 V13 H3 Q1 13 1 11 V4 Q1 2 3 2 Z" fill="#787878"/><circle cx="5" cy="7.500" r="1.300" fill="#fff"/><circle cx="9" cy="7.500" r="1.300" fill="#fff"/><circle cx="13" cy="7.500" r="1.300" fill="#fff"/></svg>
      </div>

      <div class="taskbar">
        <div class="task-btn">
          <svg viewBox="0 0 18 18" class="task-icon"><path d="M1 3.500 L8 2.500 V8.500 H1 Z M9 2.300 L17 1 V8.500 H9 Z M1 9.500 H8 V15.500 L1 14.500 Z M9 9.500 H17 V17 L9 15.700 Z" fill="#fff"/></svg>
        </div>
        <div class="task-btn">
          <svg viewBox="0 0 18 18" class="task-icon"><circle cx="11" cy="7" r="5" fill="none" stroke="#fff" stroke-width="1.300"/><path d="M7.500 10.500 L1.500 16.500" stroke="#fff" stroke-width="1.500"/></svg>
        </div>
        <div class="task-btn">
          <svg viewBox="0 0 22 18" class="task-icon-wide"><rect x="5" y="2" width="12" height="13.500" fill="none" stroke="#fff" stroke-width="1.200"/><path d="M3 4 H1 V14 H3 M19 4 H21 V14 H19" fill="none" stroke="#fff"/></svg>
        </div>
        <div class="task-btn task-explorer">
          <svg viewBox="0 0 22 20" class="task-icon-wide"><path d="M1 2 H9 L11 4 H21 V18 H1 Z" fill="#f6d465"/><rect x="1" y="5" width="20" height="13" fill="#fce28a"/><path d="M7 18 V13 H15 V18 H12.500 V15.500 H9.500 V18 Z" fill="#1c9fe6"/><rect x="1" y="3.500" width="20" height="1.500" fill="#e7b93e"/></svg>
        </div>
        <div class="task-btn task-current">
          <svg viewBox="0 0 24 26" class="task-logo">
            <circle cx="11" cy="13" r="6.500" fill="none" stroke="#d2e76e" stroke-width="3.500"/>
            <path d="M14 18 L19 23" stroke="#d2e76e" stroke-width="3.500"/>
            <path d="M6 19 C9 11 14 6 19 2 C19 9 16 15 11 17 Z" fill="#27701e"/>
          </svg>
        </div>
        <div class="tray">
          <svg class="tray-caret" viewBox="0 0 14 8"><path d="M1 7 L7 1 L13 7" fill="none" stroke="#fff" stroke-width="1.200"/></svg>
          <svg class="tray-icon" viewBox="0 0 16 12"><path d="M0 2 H4 M0 6 H4 M3 2 V6 M2 6 V9" stroke="#fff"/><rect x="5" y="3" width="10" height="8" fill="none" stroke="#fff"/><rect x="7" y="5" width="7" height="4" fill="#fff"/></svg>
          <svg class="tray-icon" viewBox="0 0 16 14"><rect x="3.500" y="1.500" width="12" height="9" fill="none" stroke="#fff"/><rect x=".5" y=".5" width="5" height="5" fill="#000" stroke="#fff"/><path d="M9.500 10 V13 M6 13.500 H13" stroke="#fff"/></svg>
          <svg class="tray-icon tray-icon-last" viewBox="0 0 16 14"><path d="M1 5 H4 L7 2 V12 L4 9 H1 Z" fill="none" stroke="#fff"/><path d="M9 4 Q11 7 9 10 M11 2.500 Q14 7 11 11.500 M13 1 Q17 7 13 13" fill="none" stroke="#fff"/></svg>
          <svg class="tray-note" viewBox="0 0 16 17"><path d="M0 0 H16 V13 H10 L8 16 L6 13 H0 Z" fill="#fff"/><path d="M3 4 H13 M3 7 H13 M3 10 H10" stroke="#000"/></svg>
          <span class="tray-lang">ENG</span>
          <span class="tray-clock"><span>17:15</span><span>10/01/2018</span></span>
          <i class="tray-peek"></i>
        </div>
      </div>
    </div>

    <div class="context-menu">
      <div class="mi mi-mid mi-hot"><svg class="mi-ic"><use href="#i-mzoom"/></svg><span>Zoom to Layer</span></div>
      <div class="mi mi-mid"><span class="mi-ic"><i class="check"></i></span><span>Show in Overview</span></div>
      <div class="mi mi-mid"><svg class="mi-ic" viewBox="0 0 16 16"><rect x="1" y="2" width="11" height="11" fill="#eee" stroke="#777"/><rect x="9" y="11" width="6" height="4" fill="#e0454a"/></svg><span>Remove</span></div>
      <div class="mi mi-tall"><svg class="mi-ic" viewBox="0 0 16 16"><rect x="1" y="4" width="10" height="11" fill="#bbb" stroke="#555"/><rect x="3" y="1" width="12" height="12" fill="#f1f1f1" stroke="#777"/><rect x="10" y="9" width="5" height="5" fill="#f5da55" stroke="#bf9c22"/></svg><span>Duplicate</span></div>
      <div class="mi"><i class="mi-ic"></i><span>Set Layer Scale Visibility</span></div>
      <div class="mi"><i class="mi-ic"></i><span>Set Layer CRS</span></div>
      <div class="mi"><i class="mi-ic"></i><span>Set Project CRS from Layer</span></div>
      <div class="mi"><i class="mi-ic"></i><span>Styles</span><i class="mi-more"></i></div>
      <hr class="mi-sep">
      <div class="mi mi-tall"><svg class="mi-ic"><use href="#i-table"/></svg><span>Open Attribute Table</span></div>
      <div class="mi mi-tall"><svg class="mi-ic"><use href="#i-pencil"/></svg><span>Toggle Editing</span></div>
      <div class="mi"><i class="mi-ic"></i><span>Save As...</span></div>
      <div class="mi"><i class="mi-ic"></i><span>Save As Layer Definition File...</span></div>
      <div class="mi"><i class="mi-ic"></i><span>Filter...</span></div>
      <div class="mi"><span class="mi-ic"><i class="check"></i></span><span>Show Feature Count</span></div>
      <hr class="mi-sep">
      <div class="mi"><i class="mi-ic"></i><span>Properties</span></div>
      <div class="mi"><i class="mi-ic"></i><span>Rename</span></div>
    </div>
  </body>
</html>
```

FILE: styles.css
```css
* {
  box-sizing: border-box;
}

html, body {
  margin: 0;
  height: 720px;
  overflow: hidden;
}

body {
  position: relative;
  font-family: "Open Sans", "Noto Sans", sans-serif;
  font-size: 11.5px;
  color: #111;
  background: #f0f0f0;
}

i {
  font-style: normal;
}

.sprite {
  display: none;
}

.svg-small { font: 700 8px "Liberation Sans", sans-serif; fill: #999; }
.svg-info { font: italic 700 14px "Liberation Serif", serif; fill: #fff; }
.svg-binfo { font: italic 700 12px "Liberation Serif", serif; fill: #fff; }
.svg-expr { font: 24px "Liberation Serif", serif; fill: #5c3a80; }
.svg-t { font: 700 17px "Liberation Serif", serif; fill: #555; }
.svg-help { font: 700 14px "Liberation Serif", serif; fill: #fff; }
.svg-abc { font: 700 9px "Liberation Sans", sans-serif; fill: #333; }
.svg-abcg { font: 700 9px "Liberation Sans", sans-serif; fill: #888; }
.svg-csw { font: 700 9px "Liberation Mono", monospace; fill: #555; }
.svg-py { font: 700 9px "Liberation Mono", monospace; fill: #333; }

.dots {
  fill: none;
  stroke: #999;
  stroke-dasharray: 1 1;
}

.app {
  display: flex;
  flex-direction: column;
  height: 720px;
}

/* window title */
.titlebar {
  display: flex;
  align-items: center;
  height: 24px;
  background: #fff;
  padding-left: 5px;
  font-size: 11.2px;
}

.app-logo {
  width: 13px;
  height: 17px;
  margin-right: 5px;
}

.window-buttons {
  display: flex;
  margin: 0 3px 3px auto;
}

.win-btn {
  width: 46px;
  height: 20px;
}

/* menu */
.menubar {
  display: flex;
  align-items: center;
  height: 22px;
  padding-left: 2px;
  border-bottom: 1px solid #bdbdbd;
  background: #eee;
  font-size: 10.6px;
}

.menubar span {
  padding: 0 7px;
}

/* toolbars */
.toolbar {
  display: flex;
  align-items: center;
  height: 39px;
  padding-left: 4px;
  border-bottom: 1px solid #c2c2c2;
  background: #f0f0f0;
}

.toolbar-second {
  border-bottom: 1px solid #b5b5b5;
}

.tool {
  display: flex;
  flex: none;
  align-items: center;
  justify-content: center;
  width: 35px;
  height: 34px;
}

.tool svg,
.side-tool svg {
  flex: none;
  width: 28px;
  height: 28px;
}

.tool.active {
  width: 34px;
  margin-right: 1px;
  border: 1px solid #9a9a9a;
  border-radius: 3px;
  background: #dadada;
}

.tool-node {
  margin-left: 2px;
}

.grip {
  flex: none;
  height: 30px;
  background-image: radial-gradient(circle, #d0d0d0 1px, transparent 1.1px);
  background-size: 3px 3px;
  background-repeat: repeat;
}

.grip-first {
  width: 5px;
  margin: 0 1px 0 2px;
}

.grip-mid {
  width: 5px;
  margin: 0 1px 0 8px;
}

.drop {
  flex: none;
  width: 0;
  height: 0;
  margin: 0 4px 0 1px;
  border-style: solid;
  border-width: 5px 4.5px 0;
  border-color: #000 transparent transparent;
}

.drop-wide {
  margin: 0 2px;
}

.drop-grey {
  margin: 0 3px 0 -2px;
  border-top-color: #8c8c8c;
}

/* main area */
.main {
  display: flex;
  height: 526px;
}

.side-toolbar {
  display: flex;
  flex: none;
  flex-direction: column;
  width: 52px;
  padding: 5px 0 0 6px;
  border-right: 1px solid #bfbfbf;
}

.grip-h {
  display: block;
  width: 40px;
  height: 5px;
  background-image: radial-gradient(circle, #d0d0d0 1px, transparent 1.1px);
  background-size: 3px 3px;
}

.grip-top {
  margin-bottom: 2px;
}

.grip-bottom {
  margin-top: 9px;
}

.side-tool {
  display: flex;
  align-items: center;
  height: 34px;
}

.side-tool .drop {
  margin: 0 0 0 3px;
}

.dock {
  display: flex;
  flex: none;
  flex-direction: column;
  width: 301px;
  padding: 0 7px 0 1px;
}

.dock-title {
  display: flex;
  flex: none;
  align-items: center;
  gap: 8px;
  height: 19px;
  padding-left: 1px;
  font-size: 9px;
  white-space: nowrap;
}

.dock-title-layers {
  height: 16px;
}

/* the rest of this title lies behind the open menu */
.title-gap {
  flex: 1.9;
}

.title-stub {
  margin-left: 0;
}

.splitter {
  display: block;
  flex: none;
  align-self: center;
  width: 48px;
  height: 6px;
  background-image: radial-gradient(circle, #d0d0d0 1px, transparent 1.1px);
  background-size: 3px 3px;
}

.grip-title {
  display: block;
  flex: 1;
  height: 5px;
  background-image: radial-gradient(circle, #d6d6d6 1px, transparent 1.1px);
  background-size: 3px 3px;
}

.dock-buttons {
  display: flex;
  gap: 1px;
}

.dock-buttons svg {
  width: 14px;
  height: 14px;
}

.dock-tools {
  display: flex;
  flex: none;
  align-items: center;
  gap: 7px;
  height: 32px;
  padding-left: 5px;
}

.dock-tools svg {
  flex: none;
  width: 20px;
  height: 20px;
}

.dock-tools-layers {
  height: 34px;
}

.tree {
  display: flex;
  flex: none;
  flex-direction: column;
  height: 314px;
  border: 1px solid #c4c4c4;
  border-radius: 2px;
  background: #fff;
}

.tree-top {
  display: flex;
  flex: 1;
  min-height: 0;
}

/* ends where the open context menu begins */
.tree-rows {
  flex: none;
  width: 119px;
  margin-right: auto;
  padding-top: 2px;
  overflow: hidden;
  font-size: 10.4px;
}

.row {
  display: flex;
  align-items: center;
  height: 16px;
  white-space: nowrap;
}

.row-current {
  background: #efefef;
}

.t {
  flex: none;
  width: 20px;
  height: 16px;
}

.f {
  flex: none;
  width: 12px;
  height: 16px;
  margin: 0 7px 0 5px;
}

.s {
  flex: none;
  width: 16px;
  height: 16px;
  margin: 0 5px 0 3px;
}

.b {
  flex: none;
  width: 20px;
  height: 14px;
  margin: 0 4px 0 1px;
}

.vscroll {
  flex: none;
  width: 17px;
  padding: 2px 1px 0 0;
}

.scroll-btn {
  display: flex;
  align-items: center;
  justify-content: center;
  width: 16px;
  height: 15px;
  border: 1px solid #a8a8a8;
  border-radius: 2px;
  background: linear-gradient(#fff, #e6e6e6);
}

.scroll-thumb {
  height: 20px;
  margin-top: 1px;
  border: 1px solid #b5b5b5;
  border-radius: 2px;
  background: linear-gradient(90deg, #f6f6f6, #e4e4e4);
}

.arrow-up {
  width: 0;
  height: 0;
  border-style: solid;
  border-width: 0 4px 4px;
  border-color: transparent transparent #000;
}

.arrow-down {
  width: 0;
  height: 0;
  border-style: solid;
  border-width: 4px 4px 0;
  border-color: #000 transparent transparent;
}

.arrow-left {
  width: 0;
  height: 0;
  border-style: solid;
  border-width: 4px 4px 4px 0;
  border-color: transparent #000 transparent transparent;
}

.hscroll {
  display: flex;
  flex: none;
  height: 17px;
  margin-bottom: 3px;
  background: #f0f0f0;
}

.hscroll-thumb {
  flex: 1;
  border: 1px solid #b5b5b5;
  border-radius: 2px;
  background: linear-gradient(#f8f8f8, #e4e4e4);
}

.layers {
  flex: 1;
  border: 2px solid #5aa8ee;
  border-radius: 2px;
  background: #fff;
}

.layer {
  display: flex;
  align-items: center;
  height: 17px;
  font-size: 11.2px;
  font-weight: 700;
  white-space: nowrap;
}

.layer .t {
  margin-left: -1px;
}

.layer-selected {
  height: 16px;
  background: #2f96f3;
  color: #fff;
}

.layer-selected .layer-name {
  width: 229px;
  margin-left: -3px;
  padding: 0 3px;
  outline: 1px dotted #c97a2e;
  text-decoration: underline;
}

.check {
  display: flex;
  flex: none;
  align-items: center;
  justify-content: center;
  width: 13px;
  height: 13px;
  border: 1px solid #bdbdbd;
  border-radius: 1px;
  background: #f8f8f8;
  font: 700 11px "DejaVu Sans", sans-serif;
  color: #000;
}

.layer .check {
  margin: 0 5px 0 4px;
}

.swatch {
  flex: none;
  width: 16px;
  height: 15px;
  margin-right: 6px;
  border: 1px solid #2c7f96;
  background: #4697ab;
}

.layer-blob {
  flex: none;
  width: 16px;
  height: 14px;
  margin-right: 6px;
}

/* map */
.canvas {
  flex: 1;
  min-width: 0;
  border-top: 1px solid #c4c4c4;
  border-left: 1px solid #c4c4c4;
  border-bottom: 1px solid #c4c4c4;
  border-top-left-radius: 2px;
  background: #fff;
}

.map {
  display: block;
  width: 927px;
  height: 525px;
  margin: -1px 0 0 -1px;
}

.land {
  fill: #489280;
  stroke: #3b5f58;
  stroke-width: .7;
  stroke-linejoin: round;
}

.border {
  fill: none;
  stroke: #1e3732;
  stroke-width: 1;
  stroke-linejoin: round;
}

/* status bar */
.statusbar {
  display: grid;
  grid-template-columns: 421px 57px 120px 30px 35px 87px 26px 61px 72px 60px 76px 24px 51px 22px 100px 30px;
  align-items: center;
  height: 30px;
  font-size: 10.6px;
  white-space: nowrap;
}

.status-msg {
  padding-left: 6px;
  font-size: 10.4px;
}

.status-pad {
  padding-left: 5px;
}

.status-pad-wide {
  padding-left: 9px;
}

.status-icon {
  justify-self: center;
  width: 16px;
  height: 18px;
}

.status-check {
  padding-left: 8px;
}

.field {
  display: flex;
  align-items: center;
  height: 20px;
  padding-left: 5px;
  border: 1px solid #b9b9b9;
  border-radius: 3px;
  background: #fff;
}

.field-center {
  justify-content: center;
  padding-left: 0;
}

.field-combo,
.field-spin {
  justify-content: space-between;
  padding-right: 0;
}

.combo-btn {
  display: flex;
  align-items: center;
  justify-content: center;
  width: 16px;
  height: 18px;
  border-left: 1px solid #c4c4c4;
  background: linear-gradient(#f4f4f4, #dcdcdc);
}

.spin {
  display: flex;
  flex-direction: column;
  align-items: center;
  justify-content: space-around;
  width: 15px;
  height: 18px;
  border-left: 1px solid #c4c4c4;
  background: linear-gradient(#f4f4f4, #e0e0e0);
}

/* taskbar */
.taskbar {
  display: flex;
  height: 40px;
  background: #000;
  color: #fff;
}

.task-btn {
  display: flex;
  flex: none;
  align-items: center;
  justify-content: center;
  width: 48px;
  height: 40px;
}

.task-explorer {
  width: 40px;
  margin: 0 5px 0 6px;
  border-bottom: 2px solid #8fbf5c;
}

.task-current {
  border-bottom: 2px solid #8fbf5c;
  background: #2e2e2e;
}

.task-icon {
  width: 18px;
  height: 18px;
}

.task-icon-wide {
  width: 22px;
  height: 20px;
}

.task-logo {
  width: 24px;
  height: 26px;
}

.tray {
  display: flex;
  align-items: center;
  margin-left: auto;
}

.tray-caret {
  width: 14px;
  height: 8px;
  margin-right: 8px;
}

.tray-icon {
  width: 16px;
  height: 14px;
  margin-right: 9px;
}

.tray-icon-last {
  margin-right: 7px;
}

.tray-note {
  width: 16px;
  height: 17px;
  margin-right: 4px;
}

.tray-lang {
  width: 36px;
  text-align: center;
  font-size: 11px;
}

.tray-clock {
  display: flex;
  flex-direction: column;
  align-items: center;
  gap: 1px;
  width: 78px;
  line-height: 16px;
}

.tray-peek {
  width: 1px;
  height: 40px;
  margin-right: 5px;
  background: #444;
}

/* right click menu over the panels */
.context-menu {
  position: absolute;
  left: 173px;
  top: 202px;
  width: 197px;
  border: 1px solid #a8a8a8;
  background: #f8f8f8;
  box-shadow: 2px 2px 3px rgba(0, 0, 0, .45);
  font-size: 11.35px;
}

.mi {
  display: flex;
  align-items: center;
  height: 21px;
  padding-bottom: 1px;
  white-space: nowrap;
}

.mi-mid {
  height: 22px;
}

.mi-tall {
  height: 23px;
}

.mi-hot {
  background: linear-gradient(#4aa3f5, #2f93ef);
  color: #fff;
}

.mi-ic {
  display: flex;
  flex: none;
  align-items: center;
  justify-content: center;
  width: 16px;
  height: 16px;
  margin: 0 6px 0 3px;
}

.mi-ic .check {
  margin-left: 4px;
}

.mi-more {
  width: 0;
  height: 0;
  margin-left: auto;
  margin-right: 9px;
  border-style: solid;
  border-width: 4px 0 4px 4px;
  border-color: transparent transparent transparent #000;
}

.mi-sep {
  height: 2px;
  margin: 0 5px;
  border: 0;
  border-top: 1px solid #bbb;
}
```
